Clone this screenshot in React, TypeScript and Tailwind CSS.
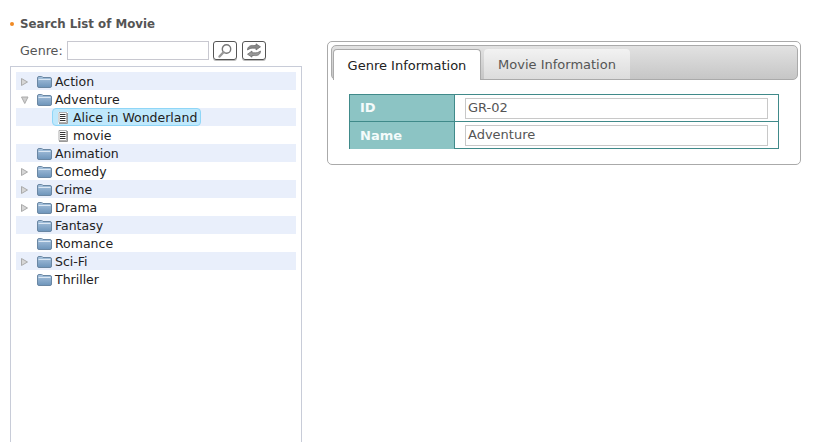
import React from "react"

const FONT = "font-['DejaVu_Sans',Verdana,sans-serif]"

function Folder() {
  return (
    <svg width="15" height="12" viewBox="0 0 15 12" className="shrink-0">
      <defs>
        <linearGradient id="fold" x1="0" y1="0" x2="0" y2="1">
          <stop offset="0" stopColor="#a9c4de" />
          <stop offset="1" stopColor="#6d94ba" />
        </linearGradient>
      </defs>
      <path d="M2 11.5 Q.5 11.5 .5 10 V2 Q.5 .5 2 .5 H4.5 Q5.5 .5 6 1.5 H13 Q14.5 1.5 14.5 3 V10 Q14.5 11.5 13 11.5 Z" fill="url(#fold)" stroke="#6a87a3" strokeWidth="1" />
      <path d="M1.5 3.5 H13.5" stroke="#dbe7f3" strokeWidth="1" />
    </svg>
  )
}

function Doc() {
  return (
    <svg width="11" height="12" viewBox="0 0 11 12" className="shrink-0">
      <rect x="1" y="0" width="10" height="12" fill="#fff" />
      <path d="M10.5 1V11.5H2" stroke="#999" fill="none" />
      <path d="M2 .5H9.5V10.5H2Z" fill="#fff" stroke="#777" strokeWidth=".6" />
      <path d="M3 2.5H8.5M3 4.5H8.5M3 6.5H8.5M3 8.5H8.5" stroke="#333" strokeWidth="1" />
    </svg>
  )
}

function Arrow({ open }: { open?: boolean }) {
  return (
    <svg width="8" height="8" viewBox="0 0 8 8" className="shrink-0">
      {open ? (
        <path d="M.5 1H7L3.75 7.5Z" fill="#cfcfcf" stroke="#aaa" />
      ) : (
        <path d="M.5 .5V7.5L6.5 4Z" fill="#d6d6d6" stroke="#aaa" />
      )}
    </svg>
  )
}

function GenreRow({ name, arrow, open, shaded }: { name: string; arrow?: boolean; open?: boolean; shaded?: boolean }) {
  return (
    <div className={`h-[18px] flex items-center pl-[5px] pt-px ${shaded ? "bg-[#e9effb]" : ""}`}>
      <div className="w-[16px] flex">{arrow && <Arrow open={open} />}</div>
      <Folder />
      <span className="ml-[3px] text-[12.5px] text-[#222] leading-[16px]">{name}</span>
    </div>
  )
}

function MovieRow({ name, selected, shaded }: { name: string; selected?: boolean; shaded?: boolean }) {
  return (
    <div className={`h-[18px] flex items-center pl-9 ${shaded ? "bg-[#e9effb]" : ""}`}>
      <div
        className={`flex items-center h-[18px] pl-[4px] pr-[3px] pt-px rounded-[4px] border ${
          selected ? "bg-[#bfe8fc] border-[#8fd6f7]" : "border-transparent"
        }`}
      >
        <Doc />
        <span className="ml-[5px] text-[12.5px] text-[#222] leading-[15px]">{name}</span>
      </div>
    </div>
  )
}

function InfoRow({ label, value, last }: { label: string; value: string; last?: boolean }) {
  return (
    <div className={`flex h-[27px] ${last ? "" : "border-b border-[#408a8a]"}`}>
      <div className="w-[105px] bg-[#8cc4c4] border-r border-[#408a8a] pl-[10px] flex items-center text-[13px] font-bold text-[#f4fbfb]">
        {label}
      </div>
      <div className="flex-1 flex items-center pl-[10px] pr-[10px]">
        <div className="w-[303px] h-[21px] border border-[#c8c8c8] px-[2px] text-[13px] leading-[17px] text-[#555]">{value}</div>
      </div>
    </div>
  )
}

export default function App() {
  return (
    <div className={`${FONT} w-[834px] h-[442px] bg-white overflow-hidden flex gap-[25px] pl-[10px]`}>
      {/* Left side - tree */}
      <div className="w-[292px] shrink-0">
        <div className="h-[41px] pt-[17px] flex items-start">
          <span className="w-1 h-1 rounded-full bg-[#f08a24] mt-[5px] shrink-0" />
          <span className="ml-[6px] text-[11.8px] leading-[15px] font-bold text-[#555]">Search List of Movie</span>
        </div>
        <div className="flex items-center h-[19px] pl-[10px]">
          <span className="text-[12.7px] text-[#555] w-[47px]">Genre:</span>
          <div className="w-[142px] h-[19px] border border-[#c8c8d0]" />
          <button className="ml-1 w-6 h-[19px] border border-[#555] rounded-[3px] shadow-[0_1px_0_#bbb] flex items-center justify-center">
            <svg width="16" height="16" viewBox="0 0 16 16">
              <circle cx="9.5" cy="6" r="4.2" fill="#fff" stroke="#777" strokeWidth="1.4" />
              <path d="M6.5 9.2L2.5 13.5" stroke="#999" strokeWidth="2.4" strokeLinecap="round" />
            </svg>
          </button>
          <button className="ml-[5px] w-6 h-[19px] border border-[#555] rounded-[3px] shadow-[0_1px_0_#bbb] flex items-center justify-center">
            <svg width="16" height="15" viewBox="0 0 16 15" fill="none">
              <path d="M1.5 7C1.5 3.5 4.5 2 7.5 2.5H10V.8L14.5 3.8 10 7V5.2H8C5.5 5 3.5 5.5 1.5 7Z" fill="#888" stroke="#666" strokeWidth=".7" />
              <path d="M14.5 8C14.5 11.5 11.5 13 8.5 12.5H6V14.2L1.5 11.2 6 8V9.8H8C10.5 10 12.5 9.5 14.5 8Z" fill="#999" stroke="#666" strokeWidth=".7" />
            </svg>
          </button>
        </div>
        <div className="mt-[6px] h-[400px] border border-[#c8ccd8] px-[5px] pt-[5px]">
          <GenreRow name="Action" arrow shaded />
          <GenreRow name="Adventure" arrow open />
          <MovieRow name="Alice in Wonderland" selected shaded />
          <MovieRow name="movie" />
          <GenreRow name="Animation" shaded />
          <GenreRow name="Comedy" arrow />
          <GenreRow name="Crime" arrow shaded />
          <GenreRow name="Drama" arrow />
          <GenreRow name="Fantasy" shaded />
          <GenreRow name="Romance" />
          <GenreRow name="Sci-Fi" arrow shaded />
          <GenreRow name="Thriller" />
        </div>
      </div>

      {/* Right side - details */}
      <div className="pt-[41px]">
        <div className="w-[474px] h-[124px] border border-[#aaa] rounded-[5px] p-[3px]">
          <div className="h-[35px] w-[467px] border border-[#aaa] rounded-[5px] bg-gradient-to-b from-[#e2e2e2] to-[#c6c6c6] flex items-end pl-px gap-[3px]">
            <div className="w-[148px] h-[31px] -mb-px bg-white border border-b-0 border-[#aaa] rounded-t-[4px] flex items-center justify-center pt-px text-[13px] text-[#222]">
              Genre Information
            </div>
            <div className="w-[146px] h-[30px] bg-gradient-to-b from-[#f2f2f2] to-[#dcdcdc] rounded-t-[4px] flex items-center justify-center pt-[2px] text-[13px] text-[#555]">
              Movie Information
            </div>
          </div>
          <div className="ml-[18px] mt-[14px] w-[430px] h-[55px] border border-[#408a8a]">
            <InfoRow label="ID" value="GR-02" />
            <InfoRow label="Name" value="Adventure" last />
          </div>
        </div>
      </div>
    </div>
  )
}
